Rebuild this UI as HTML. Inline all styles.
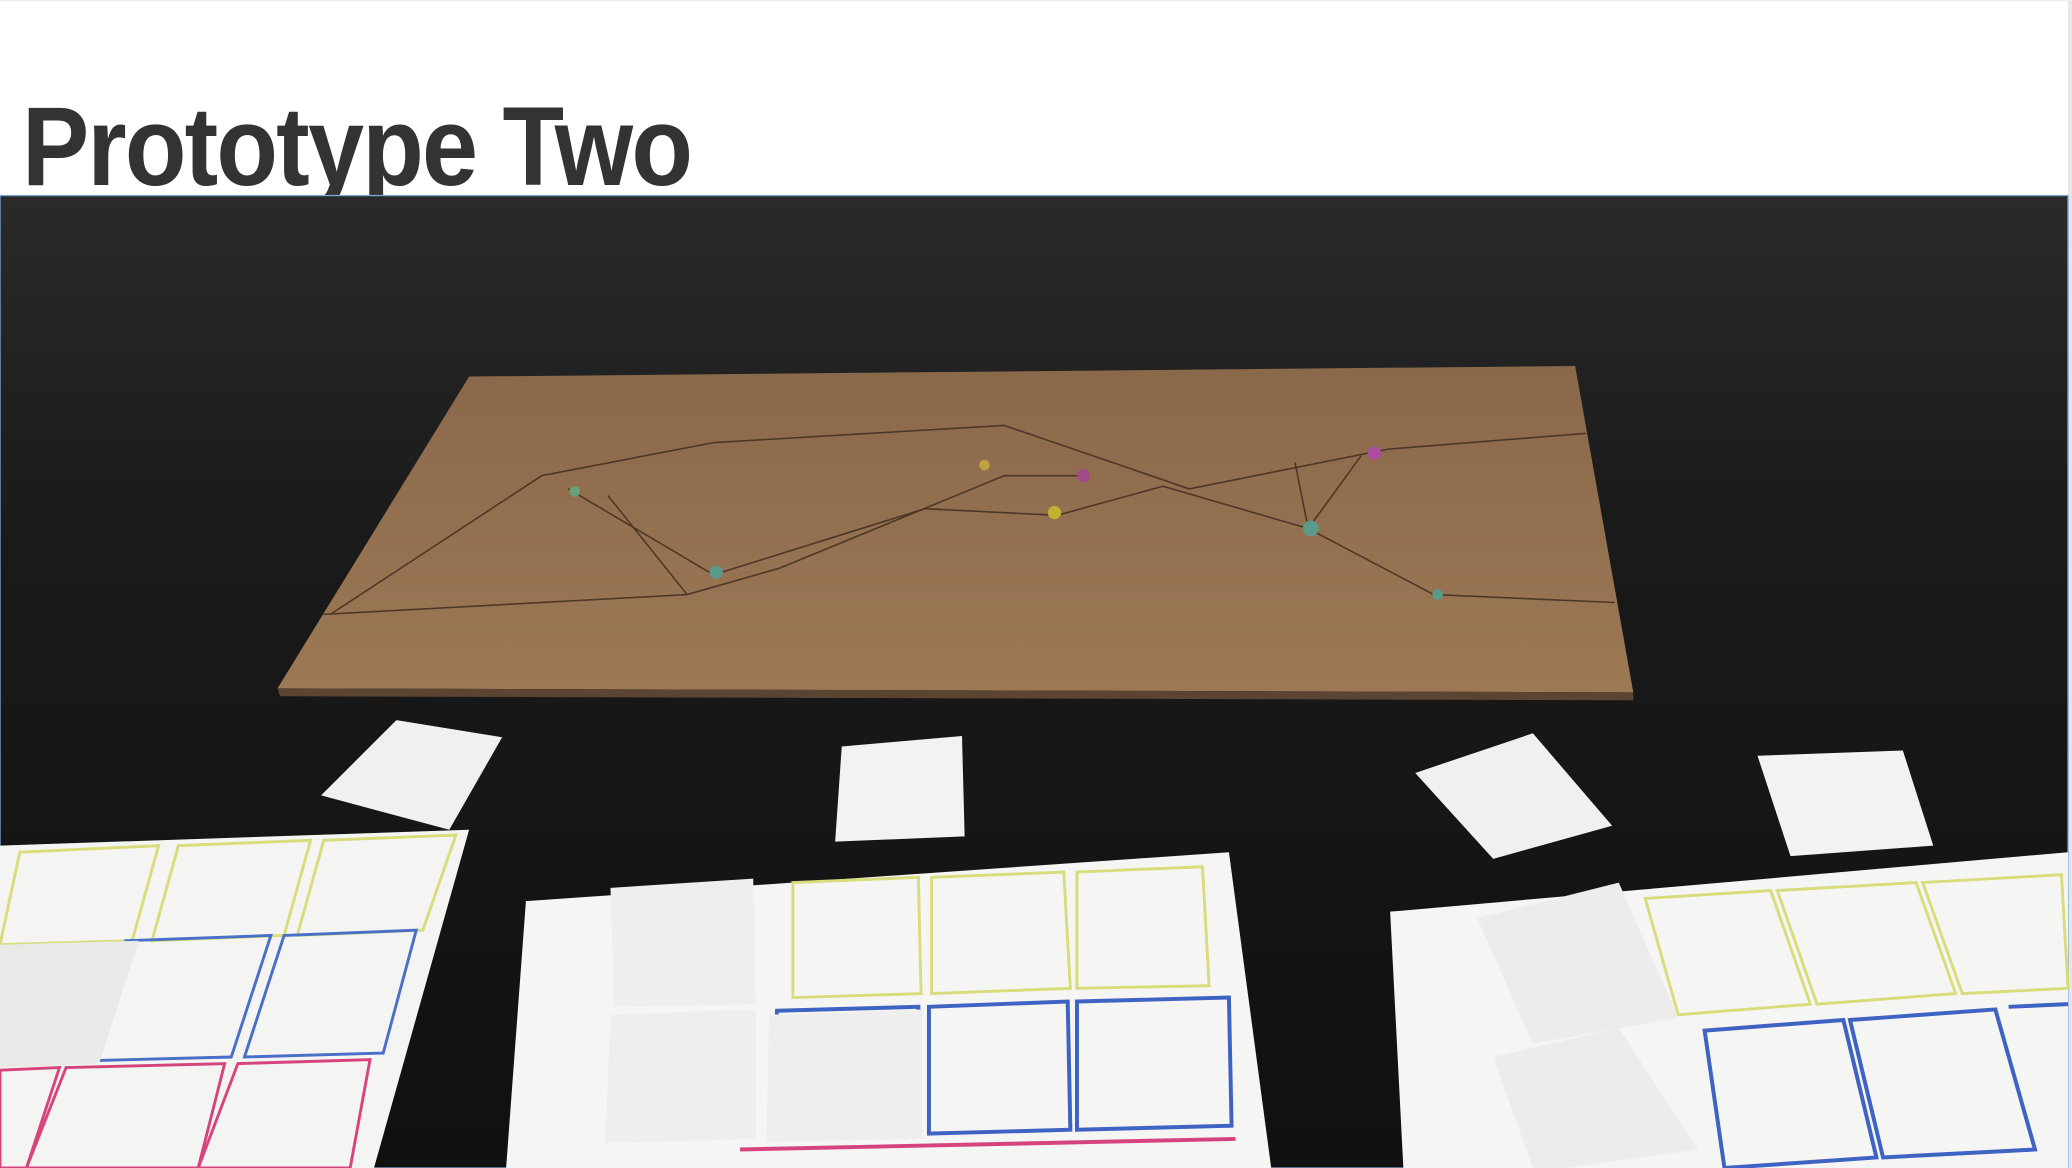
<!DOCTYPE html>
<html><head><meta charset="utf-8"><style>
html,body{margin:0;padding:0;width:2072px;height:1168px;overflow:hidden;background:#fff;}
svg{position:absolute;left:0;top:0;}
h1{position:absolute;left:22px;top:91px;margin:0;font:bold 112px/1 "Liberation Sans",sans-serif;color:#333;letter-spacing:-2px;transform:scaleX(0.9);transform-origin:0 0;white-space:nowrap;}
.sb{position:absolute;right:0;top:0;width:4px;height:1168px;background:#e6e6e6;}
</style></head><body>
<div class="sb"></div>
<h1>Prototype Two</h1>
<svg width="2072" height="1168" viewBox="0 0 1568 884" preserveAspectRatio="none">
<defs>
<linearGradient id="bg" x1="0" y1="0" x2="0" y2="1">
<stop offset="0" stop-color="#2b2a2a"/><stop offset="0.35" stop-color="#1a1a1a"/><stop offset="1" stop-color="#101010"/>
</linearGradient>
<linearGradient id="cb" x1="0" y1="0" x2="0" y2="1">
<stop offset="0" stop-color="#8a684a"/><stop offset="1" stop-color="#9c7855"/>
</linearGradient>
</defs>
<rect x="0" y="0" width="1568" height="1" fill="#eee"/>
<rect x="0" y="148" width="1565" height="736" fill="url(#bg)" stroke="#7fa7d6" stroke-width="1"/>
<polygon points="355,285 1192,277 1236,524 210,521" fill="url(#cb)"/>
<polygon points="210,521 1236,524 1236,530 212,527" fill="#5b4432"/>
<g stroke="#3b2a1e" stroke-width="1.2" fill="none" opacity="0.8">
<polyline points="250,465 410,360 540,335 760,322 900,370 1050,340 1200,328"/>
<polyline points="430,370 540,435 700,385 800,390 880,368 990,400 1085,450 1222,456"/>
<polyline points="460,375 520,450 590,430 760,360 820,360"/>
<polyline points="980,350 990,400 1030,345"/>
<line x1="245" y1="465" x2="520" y2="450"/>
</g>
<g>
<circle cx="542" cy="433" r="5" fill="#5a9a8a"/><circle cx="435" cy="372" r="4" fill="#6aa078"/>
<circle cx="820" cy="360" r="5" fill="#a14a8a"/><circle cx="798" cy="388" r="5" fill="#c0b030"/>
<circle cx="1040" cy="343" r="5" fill="#b04aa0"/><circle cx="992" cy="400" r="6" fill="#5a9a8a"/>
<circle cx="1088" cy="450" r="4" fill="#5a9a8a"/><circle cx="745" cy="352" r="4" fill="#c0a040"/>
</g>
<polygon points="300,545 380,558 340,628 243,602" fill="#f0f0f0"/>
<polygon points="637,565 728,557 730,633 632,637" fill="#f2f2f2"/>
<polygon points="1071,585 1160,555 1220,625 1130,650" fill="#f0f0f0"/>
<polygon points="1330,572 1440,568 1463,640 1355,648" fill="#f2f2f2"/>
<polygon points="0,640 355,628 283,884 0,884" fill="#f4f4f2"/>
<g fill="none" stroke-width="2.2">
<g stroke="#d8dc7a"><polygon points="15,645 120,640 100,712 0,715"/><polygon points="135,640 235,636 215,708 115,712"/><polygon points="245,636 345,632 320,704 225,708"/></g>
<g stroke="#4a6fc8"><polygon points="95,712 205,708 175,800 60,803"/><polygon points="215,708 315,704 290,797 185,800"/></g>
<g stroke="#d6447e"><polygon points="0,810 45,808 20,884 0,884"/><polygon points="50,808 170,805 150,884 20,884"/><polygon points="180,805 280,802 265,884 150,884"/></g>
</g>
<polygon points="0,715 105,712 75,805 0,808" fill="#e9e9e7"/>
<polygon points="398,682 930,645 962,884 383,884" fill="#f5f5f3"/>
<g fill="none" stroke-width="2.2">
<g stroke="#d8dc7a"><polygon points="600,668 695,664 697,752 600,755"/><polygon points="705,664 805,660 810,748 705,752"/><polygon points="815,660 910,656 915,746 815,748"/></g>
<g stroke="#3f63c3" stroke-width="3"><polygon points="588,765 695,762 695,858 582,862"/><polygon points="703,762 808,758 810,855 703,858"/><polygon points="815,758 930,755 932,852 815,855"/></g>
<g stroke="#d6447e" stroke-width="3"><line x1="560" y1="870" x2="935" y2="862"/></g>
</g>
<polygon points="462,672 570,665 572,760 465,762" fill="#eeeeec"/>
<polygon points="462,768 572,764 572,862 458,865" fill="#eeeeec"/>
<polygon points="582,768 698,764 698,862 580,864" fill="#eeeeec"/>
<polygon points="1052,690 1565,645 1565,884 1062,884" fill="#f5f5f3"/>
<g fill="none" stroke-width="2.2">
<g stroke="#d8dc7a"><polygon points="1245,680 1340,674 1370,760 1270,768"/><polygon points="1345,674 1450,668 1480,752 1375,760"/><polygon points="1455,668 1560,662 1565,748 1485,752"/></g>
<g stroke="#3f63c3" stroke-width="3"><polygon points="1290,780 1395,772 1420,876 1305,884"/><polygon points="1400,772 1510,764 1540,870 1425,876"/><line x1="1520" y1="762" x2="1565" y2="760"/></g>
</g>
<polygon points="1118,695 1225,668 1270,770 1160,790" fill="#ececea"/>
<polygon points="1130,800 1225,778 1285,870 1185,884 1160,884" fill="#ececea"/>
</svg>
</body></html>
